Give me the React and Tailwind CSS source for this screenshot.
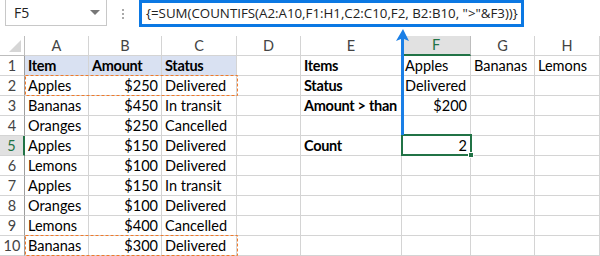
import React from "react";

const cols = ["A", "B", "C", "D", "E", "F", "G", "H"];

// r = right aligned, b = bold
const rows = [
  [{ t: "Item", b: 1 }, { t: "Amount", b: 1 }, { t: "Status", b: 1 }, {}, { t: "Items", b: 1 }, { t: "Apples" }, { t: "Bananas" }, { t: "Lemons" }],
  [{ t: "Apples" }, { t: "$250", r: 1 }, { t: "Delivered" }, {}, { t: "Status", b: 1 }, { t: "Delivered" }, {}, {}],
  [{ t: "Bananas" }, { t: "$450", r: 1 }, { t: "In transit" }, {}, { t: "Amount > than", b: 1 }, { t: "$200", r: 1 }, {}, {}],
  [{ t: "Oranges" }, { t: "$250", r: 1 }, { t: "Cancelled" }, {}, {}, {}, {}, {}],
  [{ t: "Apples" }, { t: "$150", r: 1 }, { t: "Delivered" }, {}, { t: "Count", b: 1 }, { t: "2", r: 1 }, {}, {}],
  [{ t: "Lemons" }, { t: "$100", r: 1 }, { t: "Delivered" }, {}, {}, {}, {}, {}],
  [{ t: "Apples" }, { t: "$150", r: 1 }, { t: "In transit" }, {}, {}, {}, {}, {}],
  [{ t: "Oranges" }, { t: "$100", r: 1 }, { t: "Delivered" }, {}, {}, {}, {}, {}],
  [{ t: "Lemons" }, { t: "$400", r: 1 }, { t: "Cancelled" }, {}, {}, {}, {}, {}],
  [{ t: "Bananas" }, { t: "$300", r: 1 }, { t: "Delivered" }, {}, {}, {}, {}, {}],
];

// dashed "copy" marquee
function Marquee({ top }) {
  return (
    <svg className="absolute left-[25px]" style={{ top }} width="213" height="21">
      <rect x="0.5" y="0.5" width="212" height="20" fill="none" stroke="#f07a2a" strokeWidth="1" strokeDasharray="3 2" />
    </svg>
  );
}

export default function App() {
  return (
    <div className="relative w-[600px] h-[256px] overflow-hidden bg-white font-['Lato',sans-serif] text-[14.5px] text-black">
      {/* formula bar */}
      <div className="flex items-start h-[36px]">
        <div className="ml-[5px] mt-[-1px] w-[102px] h-[27px] border border-[#c8c8c8] flex items-center justify-between pl-[8px] pr-[6px] text-[#222] font-['Open_Sans',sans-serif] text-[14px]">
          <span>F5</span>
          <span className="w-0 h-0 border-l-[5px] border-r-[5px] border-t-[5px] border-l-transparent border-r-transparent border-t-[#777]" />
        </div>
        <div className="w-[32px] flex flex-col items-center gap-[2px] pt-[9px]">
          <span className="w-[2px] h-[2px] bg-[#aaa]" />
          <span className="w-[2px] h-[2px] bg-[#aaa]" />
          <span className="w-[2px] h-[2px] bg-[#aaa]" />
        </div>
        <div className="w-[385px] h-[27px] border-[3px] border-[#0b78e3] flex items-center pl-[4px] font-['Open_Sans',sans-serif] text-[13.3px] text-[#222] whitespace-nowrap">
          {'{=SUM(COUNTIFS(A2:A10,F1:H1,C2:C10,F2, B2:B10, ">"&F3))}'}
        </div>
      </div>

      {/* grid */}
      <div className="relative">
        <div className="grid grid-cols-[25px_64px_73px_75px_64px_101px_69px_64px_65px]">
          {/* corner + column headers */}
          <div className="h-[20px] border-r border-b border-[#bdbdbd] flex items-end justify-end pr-[3px] pb-[3px]">
            <svg width="12" height="12" viewBox="0 0 12 12">
              <path d="M12 0 L12 12 L0 12 Z" fill="#d6d6d6" />
            </svg>
          </div>
          {cols.map((c) => (
            <div
              key={c}
              className={
                c === "F"
                  ? "h-[20px] border-r border-[#bdbdbd] border-b-2 border-b-[#217346] bg-[#e1e1e1] text-[#217346] flex items-center justify-center"
                  : "h-[20px] border-r border-b border-[#d4d4d4] text-[#444] flex items-center justify-center"
              }
            >
              {c}
            </div>
          ))}
          {rows.map((row, i) => (
            <React.Fragment key={i}>
              <div
                className={
                  i === 4
                    ? "h-[20px] border-r-2 border-r-[#217346] border-b border-b-[#d4d4d4] bg-[#e1e1e1] text-[#217346] flex items-center justify-center"
                    : "h-[20px] border-r border-b border-r-[#9e9e9e] border-b-[#d4d4d4] text-[#444] flex items-center justify-center"
                }
              >
                {i + 1}
              </div>
              {row.map((cell, j) => (
                <div
                  key={j}
                  className={
                    "h-[20px] border-r border-b border-[#d4d4d4] flex items-center px-[3px] whitespace-nowrap " +
                    (cell.r ? "justify-end " : "") +
                    (cell.b ? "font-bold tracking-[-0.3px] " : "") +
                    (i === 0 && j < 3 ? "bg-[#d9e1f2]" : "")
                  }
                >
                  {cell.t}
                </div>
              ))}
            </React.Fragment>
          ))}
        </div>

        <Marquee top={39} />
        <Marquee top={199} />

        {/* active cell F5 */}
        <div className="absolute left-[401px] top-[98px] w-[71px] h-[22px] border-2 border-[#217346]" />
        <div className="absolute left-[468px] top-[116px] w-[6px] h-[6px] bg-[#217346] border border-white" />
      </div>

      {/* arrow from F5 up to formula bar */}
      <svg className="absolute left-[395px] top-[27px]" width="16" height="108" viewBox="0 0 16 108">
        <path d="M8 2 L1 14 L6 12 L6 108 L9 108 L9 12 L14 14 Z" fill="#1a7fe6" />
      </svg>
    </div>
  );
}
